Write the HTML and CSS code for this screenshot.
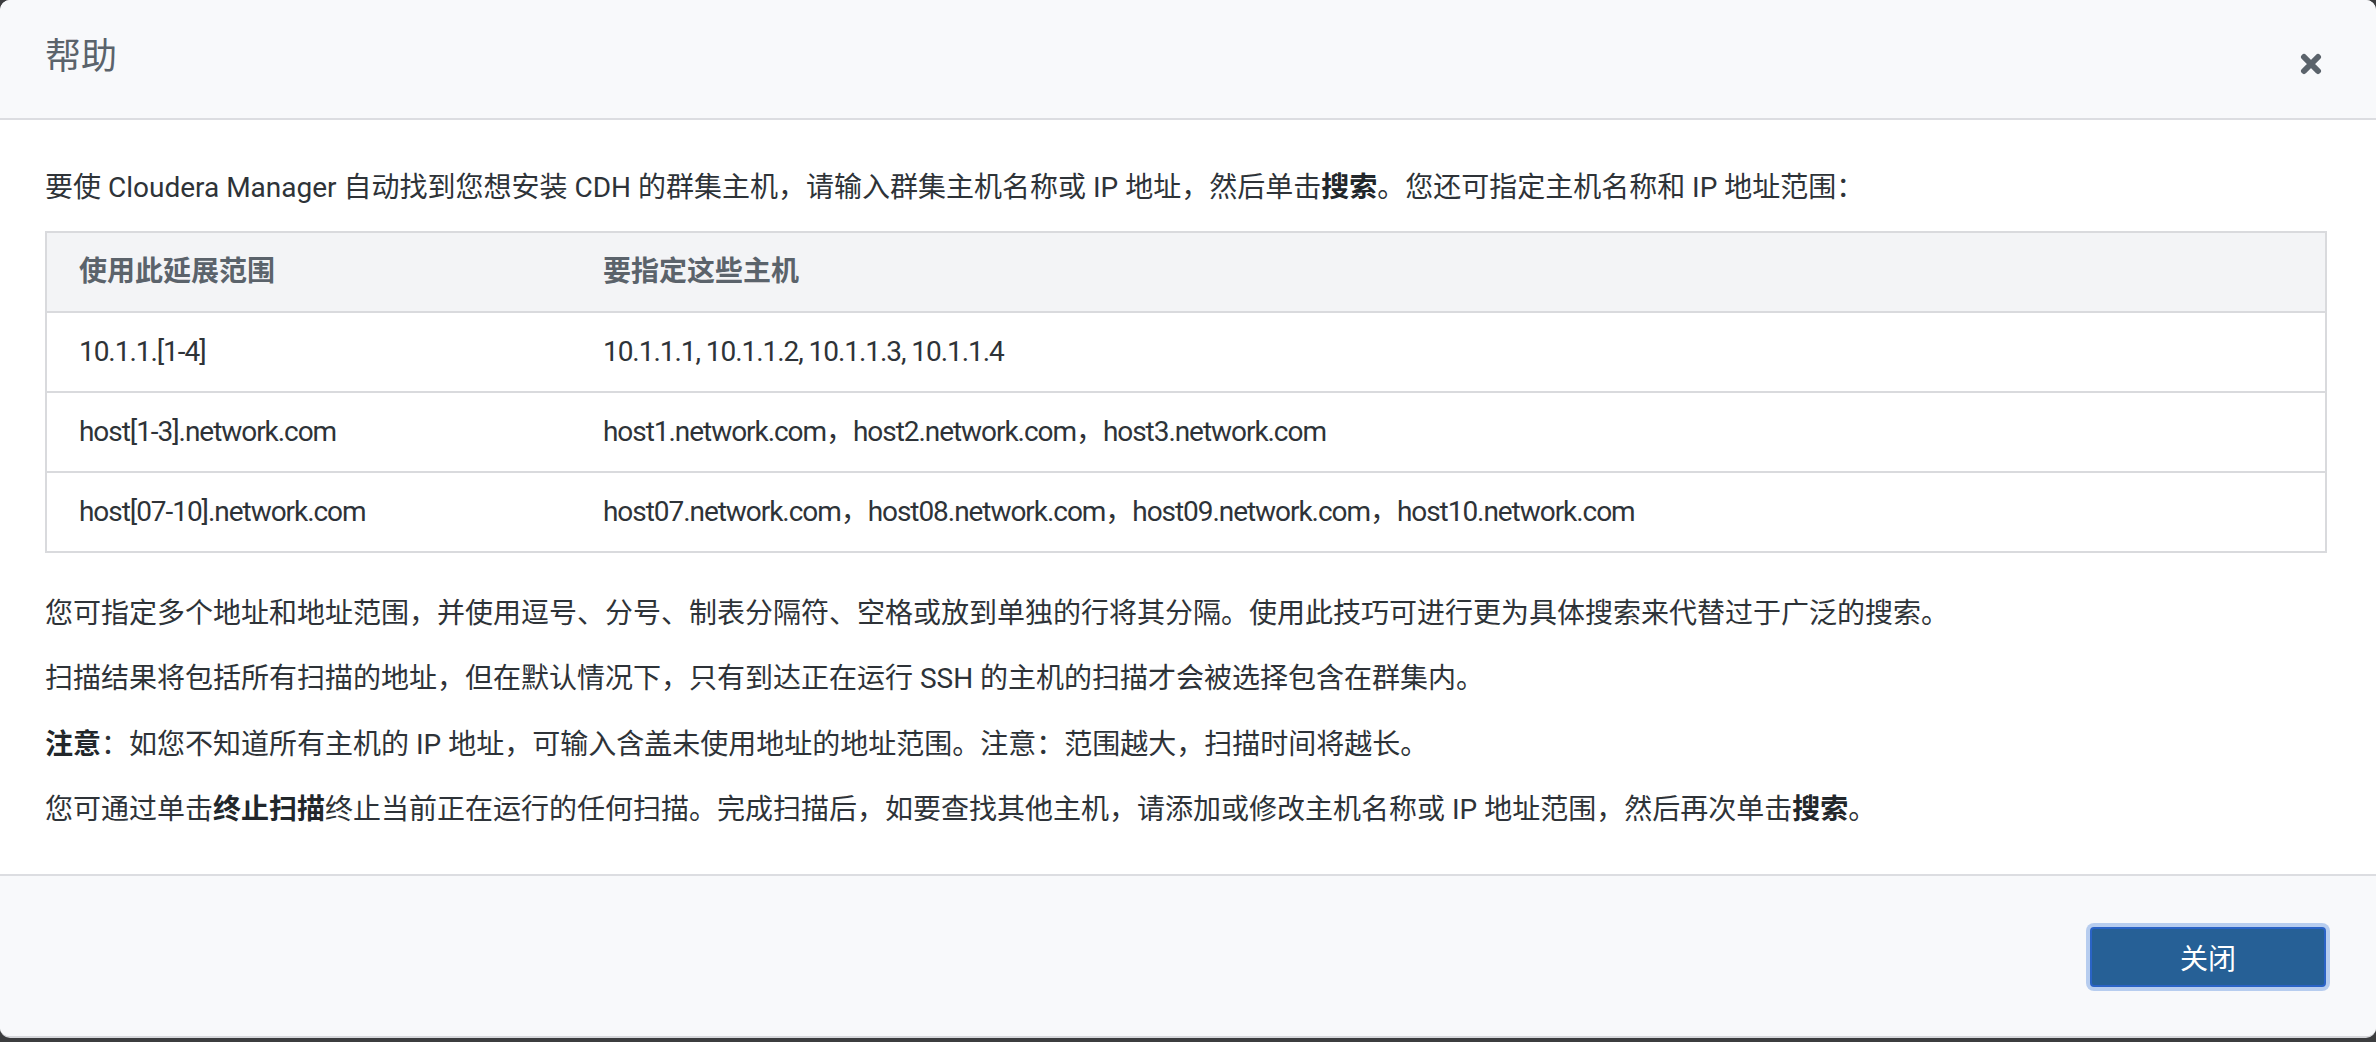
FILE: index.html
```html
<!DOCTYPE html>
<html lang="zh-CN">
<head>
<meta charset="utf-8">
<title>帮助</title>
<link rel="stylesheet" href="styles.css">
</head>
<body>
<div class="modal">
  <header class="modal-header">
    <h1 class="modal-title">帮助</h1>
    <button class="close" aria-label="关闭">
      <svg width="22" height="22" viewBox="0 0 22 22"><path d="M4 4 L18 18 M18 4 L4 18" stroke="#5b636b" stroke-width="6" stroke-linecap="round"/></svg>
    </button>
  </header>
  <main class="modal-body">
    <p class="intro">要使 Cloudera Manager 自动找到您想安装 CDH 的群集主机，请输入群集主机名称或 IP 地址，然后单击<b>搜索</b>。您还可指定主机名称和 IP 地址范围：</p>
    <table class="ranges">
      <colgroup><col class="c1"><col></colgroup>
      <thead>
        <tr><th>使用此延展范围</th><th>要指定这些主机</th></tr>
      </thead>
      <tbody>
        <tr><td>10.1.1.[1-4]</td><td>10.1.1.1, 10.1.1.2, 10.1.1.3, 10.1.1.4</td></tr>
        <tr><td>host[1-3].network.com</td><td>host1.network.com，host2.network.com，host3.network.com</td></tr>
        <tr><td>host[07-10].network.com</td><td>host07.network.com，host08.network.com，host09.network.com，host10.network.com</td></tr>
      </tbody>
    </table>
    <p class="gap">您可指定多个地址和地址范围，并使用逗号、分号、制表分隔符、空格或放到单独的行将其分隔。使用此技巧可进行更为具体搜索来代替过于广泛的搜索。</p>
    <p>扫描结果将包括所有扫描的地址，但在默认情况下，只有到达正在运行 SSH 的主机的扫描才会被选择包含在群集内。</p>
    <p><b>注意</b>：如您不知道所有主机的 IP 地址，可输入含盖未使用地址的地址范围。注意：范围越大，扫描时间将越长。</p>
    <p>您可通过单击<b>终止扫描</b>终止当前正在运行的任何扫描。完成扫描后，如要查找其他主机，请添加或修改主机名称或 IP 地址范围，然后再次单击<b>搜索</b>。</p>
  </main>
  <footer class="modal-footer">
    <button class="btn-primary">关闭</button>
  </footer>
</div>
</body>
</html>
```
FILE: styles.css
```css
html, body {
  margin: 0;
  padding: 0;
}
body {
  background: #3c3d3f;
  font-family: Roboto, "Noto Sans CJK SC", sans-serif;
  color: #2e3338;
  height: 1042px;
  overflow: hidden;
}
.modal {
  height: 1038px;
  background: #ffffff;
  border-radius: 10px;
  overflow: hidden;
  display: flex;
  flex-direction: column;
  border-bottom: 2px solid #d6d7db;
  box-sizing: border-box;
}
.modal-header {
  height: 120px;
  box-sizing: border-box;
  background: #f8f9fb;
  border-bottom: 2px solid #dcdde1;
  display: flex;
  align-items: center;
  justify-content: space-between;
  padding: 0 54px 0 45px;
}
.modal-title {
  margin: 0;
  font-size: 36px;
  font-weight: 400;
  color: #5b636b;
  line-height: 1;
  padding-bottom: 4px;
}
.close {
  border: 0;
  background: transparent;
  padding: 0;
  width: 22px;
  height: 22px;
  margin-top: 10px;
  display: flex;
}
.modal-body {
  padding: 47px 49px 43px 45px;
  font-size: 28px;
  line-height: 42px;
  border-bottom: 2px solid #dcdde1;
}
.modal-body p {
  margin: 0 0 23.5px 0;
}
.modal-body p.intro {
  margin-bottom: 21.5px;
}
.modal-body p:last-child {
  margin-bottom: 0;
}
.modal-body b {
  font-weight: 700;
  color: #22272b;
}
.modal-body p.gap {
  margin-top: 40px;
}
.ranges {
  width: 100%;
  border-collapse: collapse;
  table-layout: fixed;
  border: 2px solid #d9dadd;
}
.ranges col.c1 {
  width: 525px;
}
.ranges th, .ranges td {
  text-align: left;
  padding: 0 32px;
  height: 78px;
  border-bottom: 2px solid #d9dadd;
  white-space: nowrap;
}
.ranges th {
  background: #f3f4f6;
  color: #5b636b;
  font-weight: 700;
}
.ranges td {
  color: #2e3338;
  letter-spacing: -1.05px;
}
.modal-footer {
  flex: 1;
  background: #f8f9fb;
  display: flex;
  align-items: center;
  justify-content: flex-end;
  padding: 0 50px 0 45px;
}
.btn-primary {
  width: 236px;
  height: 60px;
  background: #266096;
  color: #ffffff;
  border: 2px solid #2a63c6;
  border-radius: 4px;
  box-shadow: 0 0 0 4px #b7cdef;
  font-family: Roboto, "Noto Sans CJK SC", sans-serif;
  font-size: 28px;
  margin-top: 2px;
}
```
